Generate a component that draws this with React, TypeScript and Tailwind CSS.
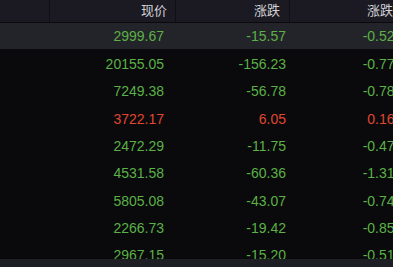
import React from "react";

const rows: { price: string; chg: string; pct: string; up?: boolean }[] = [
  { price: "20155.05", chg: "-156.23", pct: "-0.77%" },
  { price: "7249.38", chg: "-56.78", pct: "-0.78%" },
  { price: "3722.17", chg: "6.05", pct: "0.16%", up: true },
  { price: "2472.29", chg: "-11.75", pct: "-0.47%" },
  { price: "4531.58", chg: "-60.36", pct: "-1.31%" },
  { price: "5805.08", chg: "-43.07", pct: "-0.74%" },
  { price: "2266.73", chg: "-19.42", pct: "-0.85%" },
  { price: "2967.15", chg: "-15.20", pct: "-0.51%" },
];

const font = { fontFamily: '"Liberation Sans", Arial, "Noto Sans CJK SC", sans-serif' };

function Row({ price, chg, pct, up, h, bg }: { price: string; chg: string; pct: string; up?: boolean; h: string; bg: string }) {
  const color = up ? "text-[#e0472f]" : "text-[#5bb145]";
  return (
    <div className={`flex items-center ${h} ${bg} text-[14px] ${color} whitespace-nowrap`}>
      <div className="w-[50px] shrink-0" />
      <div className="w-[126px] shrink-0 text-right pr-[12px]">{price}</div>
      <div className="w-[114px] shrink-0 text-right pr-[4px]">{chg}</div>
      <div className="w-[120px] shrink-0 text-right pr-[3px]">{pct}</div>
    </div>
  );
}

export default function App() {
  return (
    <div className="relative w-[393px] h-[267px] overflow-hidden bg-[#0a0a0d]" style={font}>
      <div className="flex h-[22px] bg-[#1b1a22] text-[13px] text-[#d2d2d6] whitespace-nowrap">
        <div className="w-[50px] shrink-0 border-r border-[#0f0f14]" />
        <div className="w-[126px] shrink-0 flex items-center justify-end pr-[8px] border-r border-[#0f0f14]">现价</div>
        <div className="w-[114px] shrink-0 flex items-center justify-end pr-[9px] border-r border-[#0f0f14]">涨跌</div>
        <div className="w-[112px] shrink-0 flex items-center justify-end pr-[9px]">涨跌</div>
      </div>
      <Row price="2999.67" chg="-15.57" pct="-0.52%" h="h-[26px] mt-[1px]" bg="bg-[#232429]" />
      <div className="h-[2px]" />
      {rows.map((r) => (
        <Row key={r.price} {...r} h="h-[27.3px]" bg="" />
      ))}
      <div className="absolute left-0 right-0 bottom-0 h-[8px] bg-[#1e1e25]" />
    </div>
  );
}
